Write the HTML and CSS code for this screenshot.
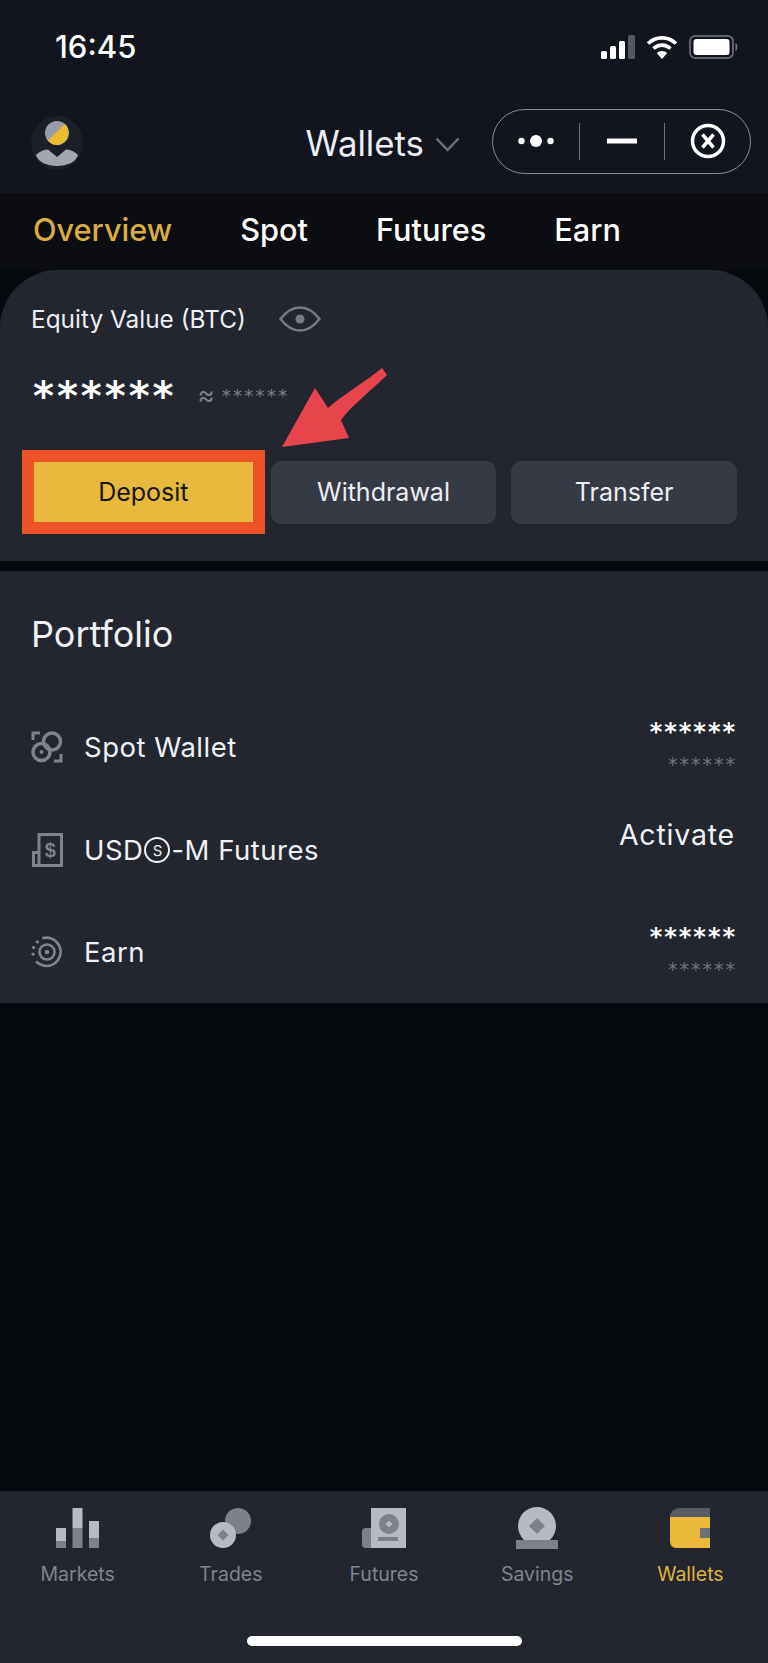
FILE: index.html
```html
<!DOCTYPE html>
<html lang="en">
<head>
<meta charset="UTF-8">
<meta name="viewport" content="width=device-width, initial-scale=1.0">
<title>Wallets</title>
<link rel="stylesheet" href="styles.css">
</head>
<body>

<div class="app">
    <div class="status-bar">
        <span class="clock">16:45</span>
        <div class="status-icons">
            <svg width="34" height="24" viewBox="0 0 34 24"><rect x="0" y="16" width="6" height="8" rx="1.5" fill="#fff"/><rect x="9" y="11" width="6" height="13" rx="1.5" fill="#fff"/><rect x="18" y="6" width="6" height="18" rx="1.5" fill="#fff"/><rect x="27" y="0" width="7" height="24" rx="1.5" fill="#55585f"/></svg>
            <svg width="32" height="24" viewBox="0 0 32 24"><path d="M2 8.500C10 1 22 1 30 8.500" fill="none" stroke="#fff" stroke-width="3.600"/><path d="M7.500 13.500C12.500 9 19.500 9 24.500 13.500" fill="none" stroke="#fff" stroke-width="3.600"/><path d="M16 24L10.800 18C13.500 15.300 18.500 15.300 21.200 18Z" fill="#fff"/></svg>
            <svg width="50" height="24" viewBox="0 0 50 24"><rect x="1" y="1" width="43" height="22" rx="5" fill="none" stroke="#777a80" stroke-width="1.500"/><rect x="4.500" y="4" width="36" height="16" rx="3" fill="#fff"/><path d="M46.500 8C49 9 49 15 46.500 16Z" fill="#777a80"/></svg>
        </div>
    </div>

    <div class="top-bar">
        <svg class="avatar" width="52" height="54" viewBox="0 0 52 54">
            <ellipse cx="26" cy="27" rx="26" ry="27" fill="#1c1f28"/>
            <circle cx="26" cy="17" r="12" fill="#9a9da6"/>
            <path d="M16.800 24.700L34 8C39.500 13 38.500 25 29 28.500C25 29.800 20.500 28.500 16.800 24.700Z" fill="#eebb2e"/>
            <path d="M5 39C8 35.500 13 33.500 17 33.500L26 41L35 33.500C39 33.500 44 35.500 47 39C45 46 36 50 26 50C16 50 7 46 5 39Z" fill="#a3a6ae"/>
        </svg>
        <div class="title">
            <span>Wallets</span>
            <svg width="25" height="15" viewBox="0 0 25 15"><path d="M1.500 1.500L12.500 13L23.500 1.500" fill="none" stroke="#6d7078" stroke-width="2.500"/></svg>
        </div>
        <div class="capsule">
            <div class="capsule-cell">
                <svg width="36" height="14" viewBox="0 0 36 14"><circle cx="3.500" cy="7" r="3.200" fill="#fff"/><circle cx="18" cy="7" r="6" fill="#fff"/><circle cx="32.500" cy="7" r="3.200" fill="#fff"/></svg>
            </div>
            <div class="capsule-cell">
                <svg width="30" height="6" viewBox="0 0 30 6"><rect width="30" height="5" y="0.500" fill="#fff"/></svg>
            </div>
            <div class="capsule-cell">
                <svg width="36" height="36" viewBox="0 0 36 36"><circle cx="18" cy="18" r="15.500" fill="none" stroke="#fff" stroke-width="3.500"/><path d="M12.500 11.500L23.500 24.500M23.500 11.500L12.500 24.500" stroke="#fff" stroke-width="3.500"/></svg>
            </div>
        </div>
    </div>

    <div class="tabs">
        <a class="tab active">Overview</a>
        <a class="tab">Spot</a>
        <a class="tab">Futures</a>
        <a class="tab">Earn</a>
    </div>

    <div class="equity-card">
        <div class="equity-head">
            <span>Equity Value (BTC)</span>
            <svg width="42" height="26" viewBox="0 0 42 26"><path d="M1.500 13C8 4.500 14 1.500 21 1.500C28 1.500 34 4.500 40.500 13C34 21.500 28 24.500 21 24.500C14 24.500 8 21.500 1.500 13Z" fill="none" stroke="#777a82" stroke-width="2.500"/><circle cx="21" cy="13" r="4.500" fill="#777a82"/></svg>
        </div>
        <div class="equity-value">
            <span class="stars-big">******</span>
            <span class="approx">≈</span>
            <span class="stars-small">******</span>
        </div>
        <div class="actions">
            <div class="deposit-mark"><button class="btn btn-deposit">Deposit</button></div>
            <button class="btn">Withdrawal</button>
            <button class="btn">Transfer</button>
        </div>
        <svg class="arrow" width="110" height="84" viewBox="0 0 110 84"><path d="M2 81L35 22L48 42C64 28 85 16 102 2L107 9C92 24 73 38 61 54L69 72Z" fill="#e8444c"/></svg>
    </div>

    <div class="portfolio">
        <h2>Portfolio</h2>
        <div class="row">
            <div class="row-name">
                <svg width="32" height="32" viewBox="0 0 32 32" fill="none" stroke="#7f838c" stroke-width="3.500"><circle cx="21" cy="10.500" r="8.500"/><circle cx="10.500" cy="21" r="8.500"/><circle cx="10.500" cy="21" r="2" fill="#7f838c" stroke="none"/><path d="M2 9V2H9M23 30H30V23" stroke-width="3"/></svg>
                <span>Spot Wallet</span>
            </div>
            <div class="row-value">
                <span class="stars-mid">******</span>
                <span class="stars-faint">******</span>
            </div>
        </div>
        <div class="row">
            <div class="row-name">
                <svg width="32" height="34" viewBox="0 0 32 34"><path d="M8 18V1.500H30.500V32.500H2.500V19.500H8" fill="none" stroke="#7f838c" stroke-width="3"/><path d="M8 18V32" stroke="#7f838c" stroke-width="3"/><text x="19.500" y="24" text-anchor="middle" class="dollar">$</text></svg>
                <span>USD<span class="coin-s">S</span>-M Futures</span>
            </div>
            <div class="row-value activate">Activate</div>
        </div>
        <div class="row">
            <div class="row-name">
                <svg width="34" height="34" viewBox="0 0 34 34" fill="none" stroke="#7f838c"><path d="M12 2.500A15 15 0 1 1 5.500 27" stroke-width="2.800"/><path d="M6.500 6L7 6.500M2.500 12L3 12.500M2 19L2.500 19.500" stroke-width="3" stroke-linecap="round"/><circle cx="17" cy="17" r="8" stroke-width="2.800"/><circle cx="17" cy="17" r="2.500" fill="#7f838c" stroke="none"/></svg>
                <span>Earn</span>
            </div>
            <div class="row-value">
                <span class="stars-mid">******</span>
                <span class="stars-faint">******</span>
            </div>
        </div>
    </div>

    <div class="spacer"></div>

    <div class="bottom-nav">
        <div class="nav-items">
            <div class="nav-item">
                <svg width="44" height="40" viewBox="0 0 44 40"><rect x="0" y="20" width="10" height="13" fill="#b7bac4"/><rect x="0" y="33" width="10" height="7" fill="#7c818c"/><rect x="16.500" y="0" width="10" height="20" fill="#b7bac4"/><rect x="16.500" y="20" width="10" height="20" fill="#7c818c"/><rect x="33" y="13" width="10" height="17" fill="#b7bac4"/><rect x="33" y="30" width="10" height="10" fill="#7c818c"/></svg>
                <span>Markets</span>
            </div>
            <div class="nav-item">
                <svg width="42" height="40" viewBox="0 0 42 40"><circle cx="28" cy="13" r="13" fill="#7c818c"/><circle cx="13" cy="27" r="13" fill="#b7bac4"/><path d="M13 21.500L18.500 27L13 32.500L7.500 27Z" fill="#7c818c"/></svg>
                <span>Trades</span>
            </div>
            <div class="nav-item">
                <svg width="44" height="40" viewBox="0 0 44 40"><path d="M0 24A4 4 0 0 1 4 20H12V40H4A4 4 0 0 1 0 36Z" fill="#7c818c"/><rect x="9" y="0" width="35" height="40" fill="#b7bac4"/><circle cx="27" cy="16" r="10" fill="#7c818c"/><path d="M27 12.500L30.500 16L27 19.500L23.500 16Z" fill="#b7bac4"/><rect x="16" y="29" width="20" height="4" fill="#7c818c"/></svg>
                <span>Futures</span>
            </div>
            <div class="nav-item">
                <svg width="42" height="42" viewBox="0 0 42 42"><circle cx="21" cy="19" r="19" fill="#b7bac4"/><path d="M21 11L29 19L21 27L13 19Z" fill="#7c818c"/><rect x="0" y="33" width="42" height="9" fill="#7c818c"/></svg>
                <span>Savings</span>
            </div>
            <div class="nav-item nav-active">
                <svg width="40" height="40" viewBox="0 0 40 40"><path d="M0 8V34A6 6 0 0 0 6 40H40V9H4Z" fill="#ebb93a"/><path d="M0 9A9 9 0 0 1 9 0H40V9H6Z" fill="#585c66"/><rect x="30" y="20" width="10" height="10" fill="#6e7076"/></svg>
                <span>Wallets</span>
            </div>
        </div>
        <div class="home-indicator"></div>
    </div>
</div>

</body>
</html>
```

FILE: styles.css
```css
* {
    box-sizing: border-box;
}

body {
    margin: 0;
    background-color: #06090d;
    font-family: Inter, "Noto Sans", sans-serif;
    color: #fff;
}

.app {
    display: flex;
    flex-direction: column;
    width: 768px;
    height: 1663px;
    overflow: hidden;
}

.status-bar {
    display: flex;
    align-items: center;
    justify-content: space-between;
    height: 92px;
    padding: 0 29px 0 55px;
    background-color: #12151e;
}

.clock {
    margin-top: 1px;
    font-size: 31px;
    font-weight: 500;
}

.status-icons {
    display: flex;
    align-items: center;
    gap: 11px;
    margin-top: 1px;
}

.top-bar {
    position: relative;
    display: flex;
    align-items: center;
    height: 101px;
    padding: 0 17px 0 31px;
    background-color: #12151e;
}

.avatar {
    margin-top: 1px;
}

.title {
    display: flex;
    align-items: center;
    gap: 11px;
    margin-left: auto;
    margin-right: 32px;
    font-size: 34.800px;
    color: #eceef3;
}

.title svg {
    margin-top: 3px;
}

.capsule {
    display: flex;
    align-items: center;
    width: 259px;
    height: 65px;
    margin-top: -3px;
    border: 1px solid #8a8d93;
    border-radius: 33px;
}

.capsule-cell {
    display: flex;
    align-items: center;
    justify-content: center;
    height: 37px;
    width: 86px;
    border-left: 1px solid #6d7076;
}

.capsule-cell:first-child {
    border-left: none;
}

.tabs {
    display: flex;
    align-items: center;
    gap: 68px;
    height: 77px;
    padding: 0 0 4px 33px;
    background-color: #0b0d10;
    font-size: 30.700px;
    font-weight: 500;
}

.tab.active {
    color: #d9ad45;
}

.equity-card {
    position: relative;
    height: 291px;
    padding: 36px 31px 0 22px;
    background-color: #23262f;
    border-radius: 58px 58px 0 0;
    box-shadow: 0 -1px 0 #0b0d10;
}

.equity-head {
    display: flex;
    align-items: center;
    gap: 33px;
    height: 26px;
    padding-left: 9px;
    font-size: 24.400px;
    color: #eceef3;
}

.equity-value {
    display: flex;
    align-items: flex-start;
    height: 60px;
    margin-top: 39px;
    padding-left: 11px;
}

.stars-big {
    font-family: "DejaVu Sans", sans-serif;
    font-size: 40px;
    font-weight: 700;
    letter-spacing: 3px;
    line-height: 50px;
}

.approx {
    margin: 4px 0 0 21px;
    font-size: 26px;
    line-height: 40px;
    color: #7c7f87;
}

.stars-small {
    margin: 5px 0 0 7px;
    font-family: "DejaVu Sans", sans-serif;
    font-size: 18px;
    line-height: 40px;
    letter-spacing: 2.300px;
    color: #7c7f87;
}

.actions {
    display: flex;
    align-items: center;
    gap: 15px;
    margin-top: 19px;
}

.deposit-mark {
    width: 243px;
    height: 84px;
    margin-right: -9px;
    border: 12px solid #ec5428;
}

.btn {
    width: 226px;
    height: 63px;
    border: none;
    border-radius: 10px;
    background-color: #363a45;
    font-family: Inter, "Noto Sans", sans-serif;
    font-size: 25px;
    color: #eceef3;
}

.btn-deposit {
    display: block;
    width: 100%;
    height: 100%;
    border-radius: 0;
    background-color: #e8b93c;
    color: #17181c;
}

.arrow {
    position: absolute;
    left: 280px;
    top: 96px;
}

.portfolio {
    height: 432px;
    margin-top: 10px;
    background-color: #23262f;
}

.portfolio h2 {
    height: 125px;
    margin: 0;
    padding: 39px 0 0 31px;
    font-size: 36px;
    line-height: 48px;
    font-weight: 400;
    color: #eff1f5;
}

.row {
    display: flex;
    align-items: center;
    justify-content: space-between;
    height: 102.500px;
    padding: 0 33px 0 31px;
}

.row-name {
    display: flex;
    align-items: center;
    gap: 21px;
    font-size: 27.500px;
    letter-spacing: 0.500px;
    color: #eff1f5;
}

.row-name svg {
    width: 32px;
}

.dollar {
    font-family: "Liberation Sans", sans-serif;
    font-size: 20px;
    font-weight: 700;
    fill: #7f838c;
}

.coin-s {
    display: inline-flex;
    align-items: center;
    justify-content: center;
    width: 26px;
    height: 26px;
    margin: 0 1px;
    border: 2px solid #eff1f5;
    border-radius: 50%;
    font-size: 15px;
    letter-spacing: 0;
    vertical-align: 4px;
}

.row-value {
    display: flex;
    flex-direction: column;
    align-items: flex-end;
    margin-top: -4px;
}

.stars-mid {
    height: 34px;
    margin-right: -2px;
    font-family: "DejaVu Sans", sans-serif;
    font-size: 24px;
    line-height: 42px;
    letter-spacing: 2px;
    font-weight: 700;
}

.stars-faint {
    height: 34px;
    margin-right: -2px;
    font-family: "DejaVu Sans", sans-serif;
    font-size: 19px;
    line-height: 38px;
    letter-spacing: 2px;
    color: #6f737c;
}

.activate {
    margin-top: -30px;
    font-size: 28.500px;
    letter-spacing: 0.800px;
    color: #eff1f5;
}

.spacer {
    flex: 1;
}

.bottom-nav {
    height: 172px;
    background-color: #23262f;
    padding-top: 16px;
}

.nav-items {
    display: flex;
    padding: 0 1px;
}

.nav-item {
    display: flex;
    flex-direction: column;
    align-items: center;
    flex: 1;
    height: 129px;
    font-size: 19.500px;
    color: #7f838c;
}

.nav-item svg {
    height: 42px;
    margin-bottom: 13px;
}

.nav-active {
    color: #dcb441;
}

.home-indicator {
    width: 275px;
    height: 10px;
    margin: 0 auto;
    border-radius: 5px;
    background-color: #fff;
}
```
